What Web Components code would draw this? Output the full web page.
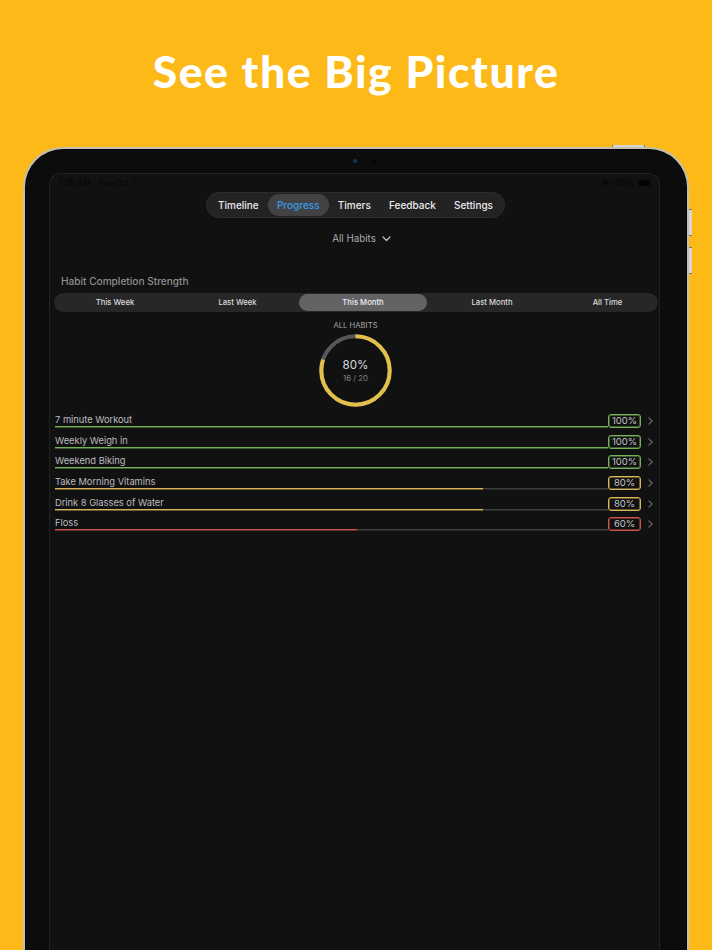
<!DOCTYPE html>
<html lang="en"><head><meta charset="utf-8"><title>See the Big Picture</title>
<style>
html,body{margin:0;height:950px;overflow:hidden;background:#fdb917}
body{font-family:Inter,"Liberation Sans",sans-serif}
</style></head><body>
<promo-page>
  <span slot="title">See the Big Picture</span>
  <ipad-device>
    <status-bar></status-bar>
    <nav-pill active="Progress" items="Timeline,Progress,Timers,Feedback,Settings"></nav-pill>
    <habit-filter>All Habits</habit-filter>
    <section-title>Habit Completion Strength</section-title>
    <period-tabs active="This Month"></period-tabs>
    <progress-ring label="ALL HABITS" value="80" detail="16 / 20"></progress-ring>
    <habit-list>
      <habit-row name="7 minute Workout" pct="100" fill="100" color="#74b25a"></habit-row>
      <habit-row name="Weekly Weigh in" pct="100" fill="100" color="#74b25a"></habit-row>
      <habit-row name="Weekend Biking" pct="100" fill="100" color="#74b25a"></habit-row>
      <habit-row name="Take Morning Vitamins" pct="80" fill="77.4" color="#d8b558"></habit-row>
      <habit-row name="Drink 8 Glasses of Water" pct="80" fill="77.4" color="#d8b558"></habit-row>
      <habit-row name="Floss" pct="60" fill="54.6" color="#cf5450"></habit-row>
    </habit-list>
  </ipad-device>
</promo-page>
<script>
function el(name, css, html, setup){
  customElements.define(name, class extends HTMLElement{
    connectedCallback(){
      if(this.shadowRoot) return;
      const r=this.attachShadow({mode:'open'});
      r.innerHTML='<style>'+css+'</style>'+(typeof html==='function'?html(this):html);
      if(setup) setup(this,r);
    }
  });
}
el('promo-page',`
  :host{display:block;height:950px;overflow:hidden}
  header{height:147px;box-sizing:border-box;padding-top:41px;text-align:center;color:#fff;
    font:900 44.5px/60px Lato,"Open Sans",sans-serif;letter-spacing:1.550px}
`,`<header><slot name="title"></slot></header><slot></slot>`);

el('ipad-device',`
  :host{display:block;position:relative;margin-left:23px;width:666px;height:1000px;box-sizing:border-box;
    border:2px solid #c4bfb1;border-bottom:0;border-radius:40px 40px 0 0;background:#0c0c0c;
    padding:24px 27px 0 24px;box-shadow:inset 0 0 0 1px #050505}
  .screen{height:100%;box-sizing:border-box;background:#111111;border:1px solid #222222;border-bottom:0;
    border-radius:12px 12px 0 0;color:#d6d6da}
  .cam{position:absolute;top:10px;width:4px;height:4px;border-radius:50%}
  .b{position:absolute;box-sizing:border-box;background:#d8d6d2;border:0 solid #77746e}
`,`<i class="cam" style="left:328px;background:#123a52"></i><i class="cam" style="left:348px;background:#030303"></i>
  <i class="b" style="left:587px;top:-4px;width:33px;height:2px;border-inline-width:1px"></i>
  <i class="b" style="left:664px;top:60px;width:2.500px;height:27px;border-block-width:1px"></i>
  <i class="b" style="left:664px;top:98px;width:2.500px;height:27px;border-block-width:1px"></i>
  <div class="screen"><slot></slot></div>`);

el('status-bar',`
  :host{display:flex;justify-content:space-between;align-items:center;height:18px;padding:0 9px 0 9px;
    font:500 8.300px/18px Inter,sans-serif;color:#070707}
  .r{display:flex;align-items:center;gap:2px}
  .bat{width:12px;height:6px;border-radius:2px;background:#050505;margin-left:2px}
  .t{display:flex;gap:7px}
`,`<div class="t"><span>1:29 AM</span><span>Tue Oct 7</span></div>
  <div class="r"><svg width="9" height="7" viewBox="0 0 18 14"><path fill="#070707" d="M9 14l-3-3.600a4.600 4.600 0 0 1 6 0zM4.600 8.700 3 6.800a9.300 9.300 0 0 1 12 0l-1.600 1.900a6.800 6.800 0 0 0-8.800 0zM1.600 5.100 0 3.200a14 14 0 0 1 18 0l-1.600 1.900a11.500 11.500 0 0 0-14.800 0z"/></svg><span>100%</span><i class="bat"></i></div>`);

el('nav-pill',`
  :host{display:flex;justify-content:center;margin-left:2px}
  nav{display:flex;align-items:center;height:26px;box-sizing:border-box;padding:0 2px;background:#232324;border-radius:13px;
    border:1px solid #2c2c2d;font:500 10px/1 Inter,sans-serif;color:#ececee}
  span{padding:0 9.100px}
  .on{background:#424245;color:#3b9bea;border-radius:11px;height:22px;line-height:22px}
`,h=>{const a=h.getAttribute('active');
  return '<nav>'+h.getAttribute('items').split(',').map(t=>`<span class="${t===a?'on':''}">${t}</span>`).join('')+'</nav>';});

el('habit-filter',`
  :host{display:flex;justify-content:center;align-items:center;gap:6px;margin-top:13.500px;margin-left:14px;height:14px;
    font:400 9.800px/14px Inter,sans-serif;color:#a9a9ae}
  svg{display:block}
`,`<slot></slot><svg width="9" height="6" viewBox="0 0 9 6"><path d="M1 1l3.500 3.500L8 1" fill="none" stroke="#c4c4c8" stroke-width="1.200" stroke-linecap="round" stroke-linejoin="round"/></svg>`);

el('section-title',`
  :host{display:block;margin:28.500px 0 0 11px;height:14px;font:500 10.100px/14px Inter,sans-serif;color:#8e8e92}
`,`<slot></slot>`);

el('period-tabs',`
  :host{display:grid;grid-template-columns:122fr 123fr 128fr 130fr 101fr;align-items:center;height:19px;
    margin:5px 1px 0 4px;background:#272728;border-radius:9.500px;font:500 7.700px/1 Inter,sans-serif;color:#dcdcdf}
  span{display:block;text-align:center;height:17px;line-height:17px;border-radius:8.500px}
  .on{background:#636366;color:#f0f0f2}
`,h=>{const a=h.getAttribute('active');
  return ['This Week','Last Week','This Month','Last Month','All Time'].map(t=>`<span class="${t===a?'on':''}">${t}</span>`).join('');});

el('progress-ring',`
  :host{display:block;text-align:center;margin-top:8px;margin-left:2px}
  .l{font:400 7.700px/11px Inter,sans-serif;color:#a5a5aa;height:11px}
  .w{position:relative;width:73px;height:73px;margin:2.500px auto 0}
  svg{display:block}
  .c{position:absolute;inset:0;box-sizing:border-box;padding-top:2px;display:flex;flex-direction:column;align-items:center;justify-content:center}
  b{font:400 11.600px/15px Inter,sans-serif;color:#d9d9e0}
  small{font:400 7.800px/11px Inter,sans-serif;color:#808085}
`,h=>{const v=+h.getAttribute('value');const r=34.200,c=2*Math.PI*r;
  return `<div class="l">${h.getAttribute('label')}</div><div class="w">
  <svg width="73" height="73" viewBox="0 0 73 73"><circle cx="36.500" cy="36.500" r="${r}" fill="none" stroke="#58585a" stroke-width="4"/>
  <circle cx="36.500" cy="36.500" r="${r}" fill="none" stroke="#e3bf4c" stroke-width="4" stroke-dasharray="${c*v/100} ${c}" transform="rotate(-90 36.500 36.500)"/></svg>
  <div class="c"><b>${v}%</b><small>${h.getAttribute('detail')}</small></div></div>`;});

el('habit-list',`:host{display:block;margin:1px 0 0 5px}`,`<slot></slot>`);

el('habit-row',`
  :host{display:grid;grid-template-columns:553px 33px 1fr;align-items:end;height:20.670px;
    --s:color-mix(in srgb,var(--c) 45%,#111)}
  .m{display:flex;flex-direction:column;justify-content:flex-end;height:100%}
  .n{font:400 9.300px/13px Inter,sans-serif;color:#bcbcc0}
  .t{height:2px;background:linear-gradient(#3d3d3f 50%,#262627 50%)}
  .f{height:100%;background:linear-gradient(var(--c) 50%,var(--s) 50%)}
  .p{box-sizing:border-box;height:14px;border:1px solid var(--c);border-radius:3px;text-align:center;
    box-shadow:inset 0 0 0 1px var(--s);
    font:400 9.500px/12px Inter,sans-serif;color:#c2c2c6}
  svg{display:block;margin:0 0 3px 6.500px}
`,h=>{h.style.setProperty('--c',h.getAttribute('color'));
  return `<div class="m"><div class="n">${h.getAttribute('name')}</div><div class="t"><div class="f" style="width:${h.getAttribute('fill')}%"></div></div></div>
  <div class="p">${h.getAttribute('pct')}%</div>
  <svg width="5" height="8" viewBox="0 0 5 8"><path d="M.8.800 4.200 4 .8 7.200" fill="none" stroke="#6c6c70" stroke-width="1.100" stroke-linecap="round" stroke-linejoin="round"/></svg>`;});
</script>
</body></html>
